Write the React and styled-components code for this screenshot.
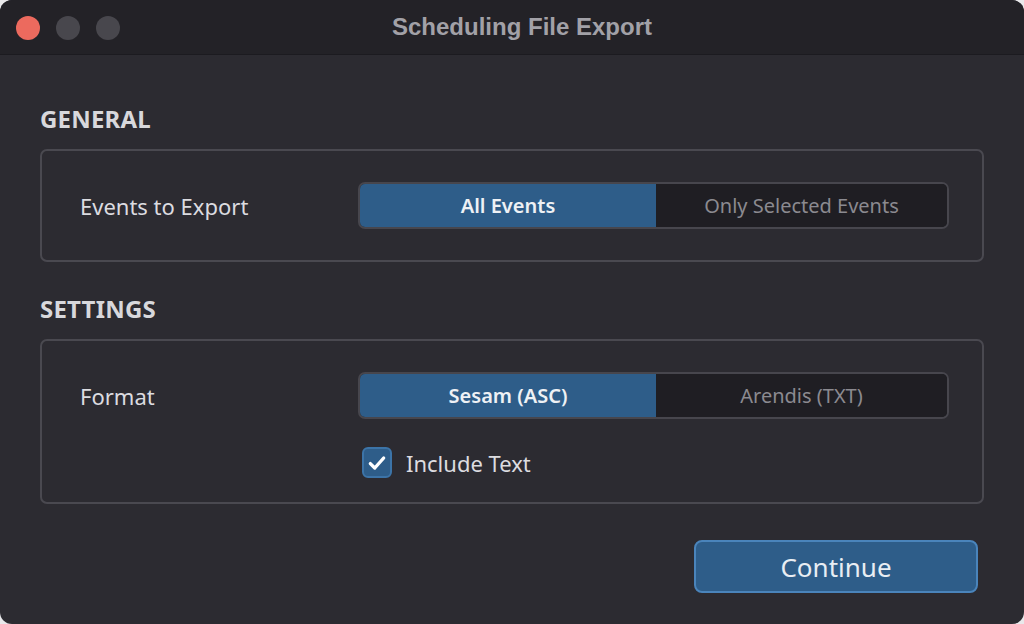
import React from "react";
import styled, { createGlobalStyle } from "styled-components";

const Global = createGlobalStyle`
  html, body { margin: 0; padding: 0; background: #e9e9eb; }
  * { box-sizing: border-box; }
`;
const Win = styled.div`
  width: 1024px; height: 624px; border-radius: 12px; overflow: hidden;
  background: #2c2b31; display: flex; flex-direction: column;
  font-family: "Noto Sans", "Open Sans", sans-serif; color: #e4e4e8;
`;
const TitleBar = styled.div`
  height: 55px; background: #232227; position: relative;
  display: flex; align-items: center; justify-content: center;
  border-bottom: 1px solid #1c1b20;
`;
const Lights = styled.div`
  position: absolute; left: 16px; top: 16px; display: flex; gap: 16px;
`;
const Light = styled.span`
  width: 24px; height: 24px; border-radius: 50%; background: ${p => p.c};
`;
const Title = styled.div`
  font-family: "Liberation Sans", Arial, sans-serif; font-weight: 700;
  font-size: 24px; color: #a2a1a7; margin-left: 20px;
`;
const Body = styled.div`
  flex: 1; padding: 50px 40px 0 40px; display: flex; flex-direction: column;
`;
const Heading = styled.div`
  font-size: 24px; font-weight: 700; color: #d8d8dc; height: 28px; line-height: 28px;
  margin-bottom: 16px; letter-spacing: 0.2px;
`;
const Box = styled.div`
  border: 2px solid #4a4950; border-radius: 7px; padding: ${p => p.pad};
  margin-bottom: ${p => p.mb}px; display: flex; flex-direction: column;
`;
const Row = styled.div`
  display: flex; align-items: center;
`;
const Label = styled.div`
  width: 316px; flex: 0 0 316px; padding-left: 38px; font-size: 22px; color: #dcdce0;
`;
const Seg = styled.div`
  display: flex; width: 591px; height: 47px; border: 2px solid #47464d;
  border-radius: 7px; overflow: hidden; background: #1f1e23;
`;
const SegBtn = styled.div`
  flex: ${p => (p.active ? "0 0 296px" : "1")}; display: flex; align-items: center; justify-content: center;
  font-size: 20px; font-weight: ${p => (p.active ? 600 : 400)};
  background: ${p => (p.active ? "#2e5d89" : "#1f1e23")};
  color: ${p => (p.active ? "#eef1f5" : "#8b8a90")};
`;
const CheckRow = styled.div`
  display: flex; align-items: center; gap: 14px; margin-left: 320px; margin-top: 28px;
  font-size: 22px; color: #dcdce0;
`;
const Check = styled.span`
  width: 30px; height: 31px; border-radius: 6px; background: #2e5d89;
  border: 2px solid #3c74a8; display: flex; align-items: center; justify-content: center;
`;
const Footer = styled.div`
  display: flex; justify-content: flex-end; padding-right: 6px;
`;
const Button = styled.div`
  width: 284px; height: 53px; border-radius: 8px; background: #2e5d89;
  border: 2px solid #4a84bb; display: flex; align-items: center; justify-content: center;
  font-size: 26px; color: #e8edf3;
`;

export default function App() {
  return (
    <>
      <Global />
      <Win>
        <TitleBar>
          <Lights>
            <Light c="#ec6a5e" /><Light c="#48474d" /><Light c="#48474d" />
          </Lights>
          <Title>Scheduling File Export</Title>
        </TitleBar>
        <Body>
          <Heading>GENERAL</Heading>
          <Box pad="31px 0 31px 0" mb={33}>
            <Row>
              <Label>Events to Export</Label>
              <Seg>
                <SegBtn active>All Events</SegBtn>
                <SegBtn>Only Selected Events</SegBtn>
              </Seg>
            </Row>
          </Box>
          <Heading>SETTINGS</Heading>
          <Box pad="31px 0 24px 0" mb={36}>
            <Row>
              <Label>Format</Label>
              <Seg>
                <SegBtn active>Sesam (ASC)</SegBtn>
                <SegBtn>Arendis (TXT)</SegBtn>
              </Seg>
            </Row>
            <CheckRow>
              <Check>
                <svg width="20" height="20" viewBox="0 0 18 18">
                  <path d="M3 9.5l4 4 8-9" stroke="#fff" strokeWidth="3" fill="none" strokeLinecap="round" strokeLinejoin="round" />
                </svg>
              </Check>
              Include Text
            </CheckRow>
          </Box>
          <Footer><Button>Continue</Button></Footer>
        </Body>
      </Win>
    </>
  );
}
